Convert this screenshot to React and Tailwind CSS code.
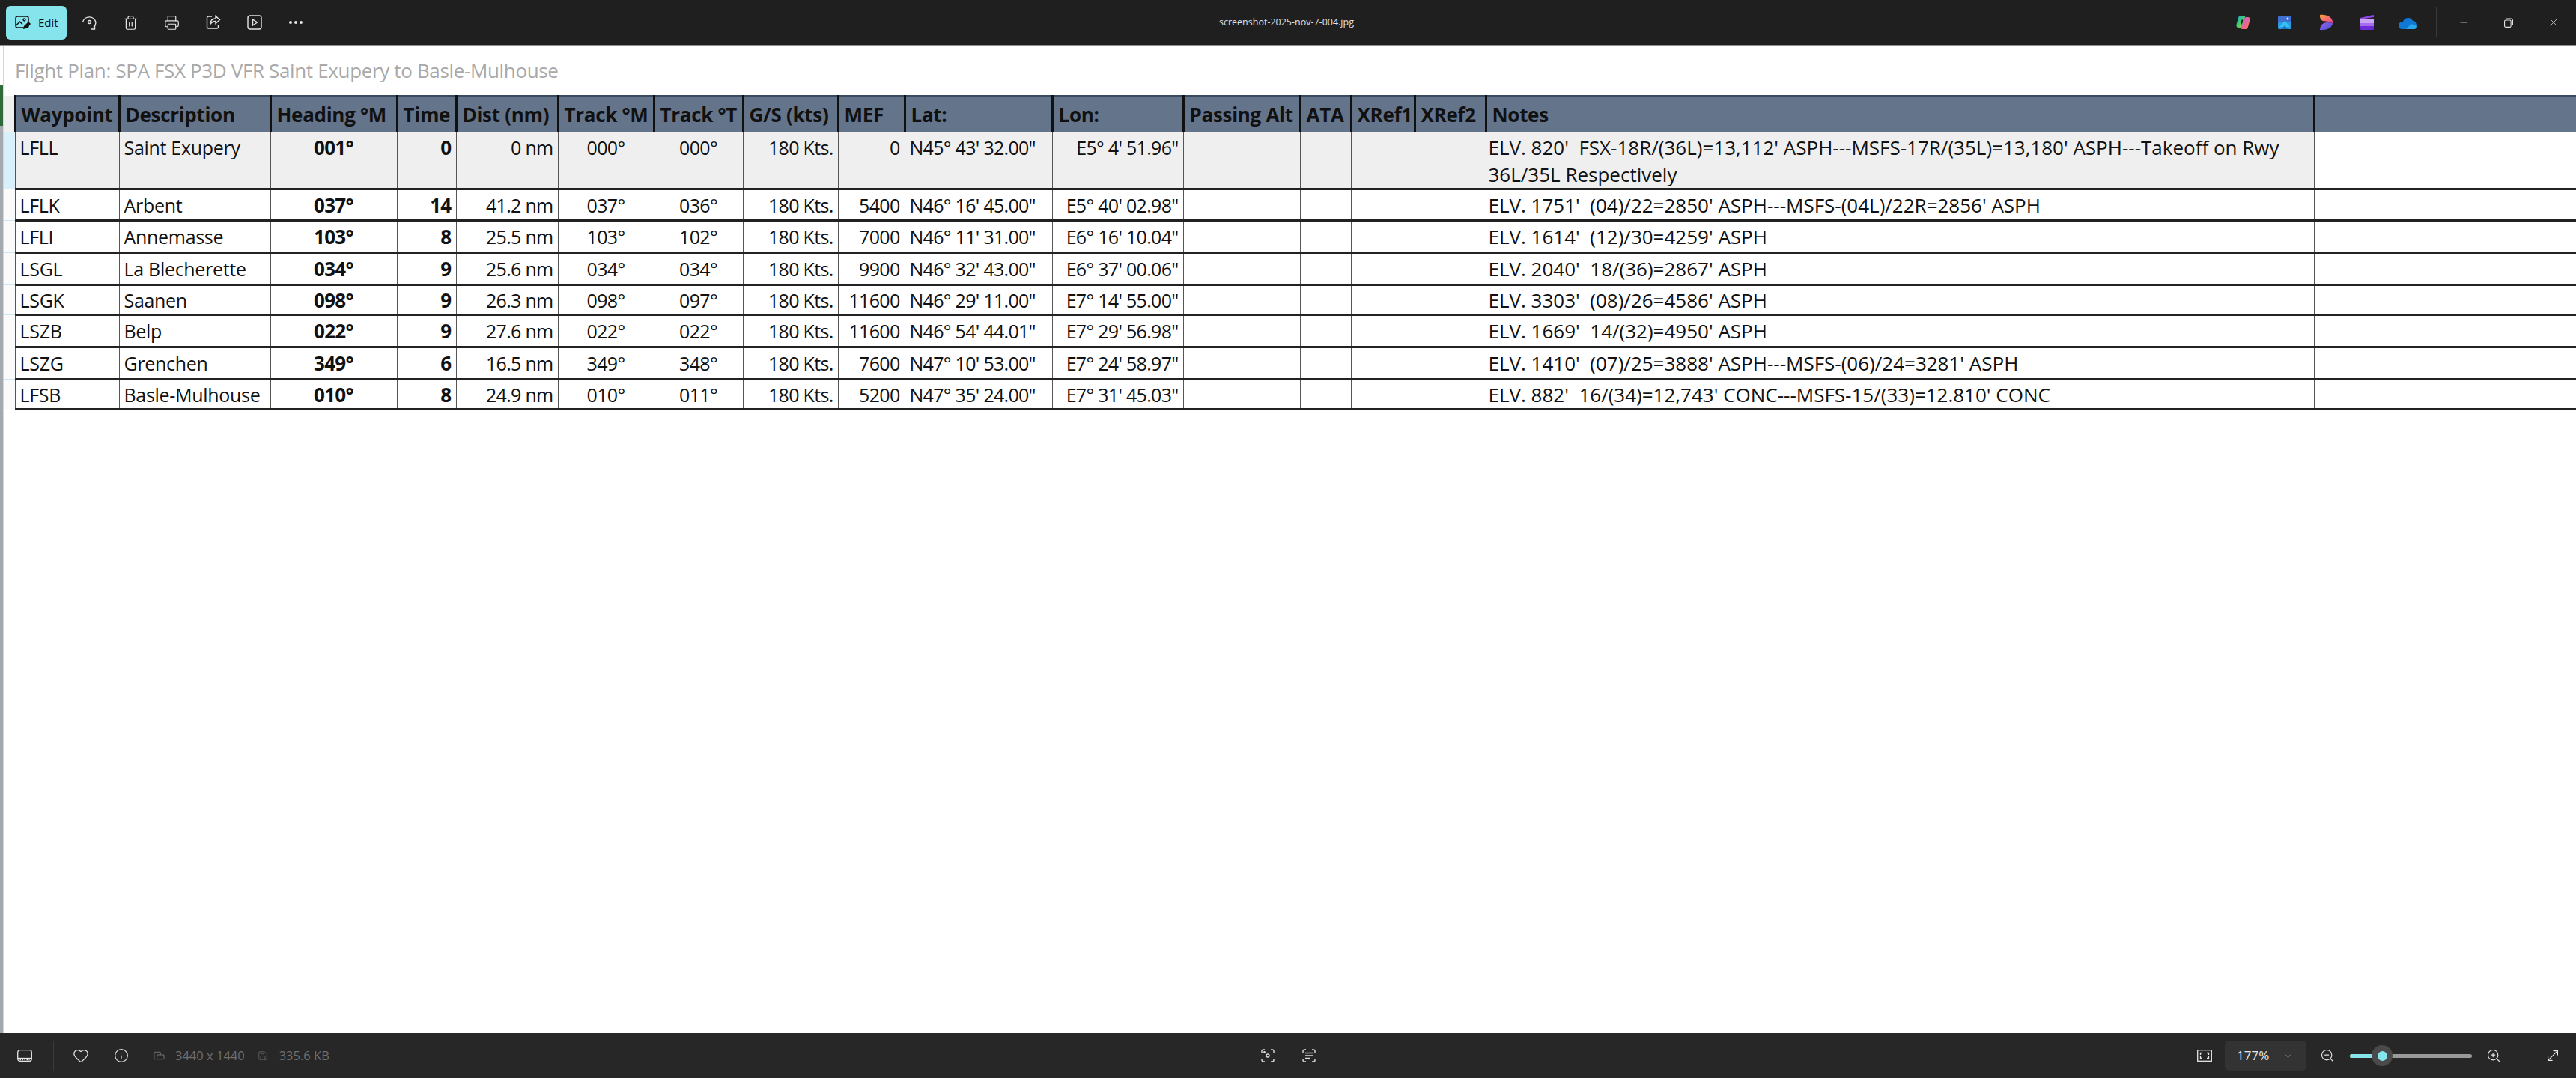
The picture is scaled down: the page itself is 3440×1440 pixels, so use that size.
import React from "react";
import { Trash2, Printer, Minus, X, Heart, Info, Save, ChevronDown, ZoomIn, ZoomOut, MoveDiagonal, MoreHorizontal } from "lucide-react";

const columns = [
  { label: "Waypoint", width: 139 },
  { label: "Description", width: 202 },
  { label: "Heading °M", width: 169 },
  { label: "Time", width: 79 },
  { label: "Dist (nm)", width: 136 },
  { label: "Track °M", width: 128 },
  { label: "Track °T", width: 119 },
  { label: "G/S (kts)", width: 127 },
  { label: "MEF", width: 89 },
  { label: "Lat:", width: 197 },
  { label: "Lon:", width: 175 },
  { label: "Passing Alt", width: 156 },
  { label: "ATA", width: 68 },
  { label: "XRef1", width: 85 },
  { label: "XRef2", width: 95 },
  { label: "Notes", width: 1106 },
];

const rows = [
  ["LFLL", "Saint Exupery", "001°", "0", "0 nm", "000°", "000°", "180 Kts.", "0", `N45° 43' 32.00"`, `E5° 4' 51.96"`, "ELV. 820'\u00a0\u00a0FSX-18R/(36L)=13,112' ASPH---MSFS-17R/(35L)=13,180' ASPH---Takeoff on Rwy 36L/35L Respectively"],
  ["LFLK", "Arbent", "037°", "14", "41.2 nm", "037°", "036°", "180 Kts.", "5400", `N46° 16' 45.00"`, `E5° 40' 02.98"`, "ELV. 1751'\u00a0\u00a0(04)/22=2850' ASPH---MSFS-(04L)/22R=2856' ASPH"],
  ["LFLI", "Annemasse", "103°", "8", "25.5 nm", "103°", "102°", "180 Kts.", "7000", `N46° 11' 31.00"`, `E6° 16' 10.04"`, "ELV. 1614'\u00a0\u00a0(12)/30=4259' ASPH"],
  ["LSGL", "La Blecherette", "034°", "9", "25.6 nm", "034°", "034°", "180 Kts.", "9900", `N46° 32' 43.00"`, `E6° 37' 00.06"`, "ELV. 2040'\u00a0\u00a018/(36)=2867' ASPH"],
  ["LSGK", "Saanen", "098°", "9", "26.3 nm", "098°", "097°", "180 Kts.", "11600", `N46° 29' 11.00"`, `E7° 14' 55.00"`, "ELV. 3303'\u00a0\u00a0(08)/26=4586' ASPH"],
  ["LSZB", "Belp", "022°", "9", "27.6 nm", "022°", "022°", "180 Kts.", "11600", `N46° 54' 44.01"`, `E7° 29' 56.98"`, "ELV. 1669'\u00a0\u00a014/(32)=4950' ASPH"],
  ["LSZG", "Grenchen", "349°", "6", "16.5 nm", "349°", "348°", "180 Kts.", "7600", `N47° 10' 53.00"`, `E7° 24' 58.97"`, "ELV. 1410'\u00a0\u00a0(07)/25=3888' ASPH---MSFS-(06)/24=3281' ASPH"],
  ["LFSB", "Basle-Mulhouse", "010°", "8", "24.9 nm", "010°", "011°", "180 Kts.", "5200", `N47° 35' 24.00"`, `E7° 31' 45.03"`, "ELV. 882'\u00a0\u00a016/(34)=12,743' CONC---MSFS-15/(33)=12.810' CONC"],
];

const rowHeights = ["h-[75px]", "h-[42px]", "h-[43px]", "h-[43px]", "h-[40px]", "h-[43px]", "h-[43px]", "h-[40px]"];

const cellAlign = {
  0: "tracking-[-0.3px]",
  1: "tracking-[-0.3px]",
  2: "text-center font-bold text-[26px]",
  3: "text-right font-bold text-[26px]",
  4: "text-right",
  5: "text-center",
  6: "text-center",
  7: "text-right",
  8: "text-right",
  10: "text-right",
};

// Toolbar icons lucide has no match for
function EditIcon() {
  return (
    <svg width="22" height="22" viewBox="0 0 22 22" fill="none" stroke="#111" strokeWidth="1.5">
      <rect x="1" y="3" width="17" height="15" rx="2.5" />
      <circle cx="12.5" cy="7.5" r="1.4" />
      <path d="M1.5 15l5-5 3.5 3.5" />
      <path d="M11 20l1-4 6-6 3 3-6 6z" fill="#111" stroke="none" />
    </svg>
  );
}

function RotateIcon() {
  return (
    <svg width="22" height="22" viewBox="0 0 22 22" fill="none" stroke="#e6e6e6" strokeWidth="1.4">
      <path d="M1.5 10.5A9 9 0 0 1 19 11a9 9 0 0 1-3 6.5" />
      <path d="M17.5 14.5v5.5h-5.5" />
      <circle cx="10.5" cy="10.5" r="2" />
    </svg>
  );
}

function ShareIcon() {
  return (
    <svg width="20" height="20" viewBox="0 0 20 20" fill="none" stroke="#e6e6e6" strokeWidth="1.4">
      <path d="M8 2H3.500A2 2 0 0 0 1.500 4v12a2 2 0 0 0 2 2h11a2 2 0 0 0 2-2v-3" />
      <path d="M13 1.500l5.500 5-5.500 5V8.500c-3.500 0-5.500 1-7 4 0-5 2.500-7.500 7-7.500z" />
    </svg>
  );
}

function SlideshowIcon() {
  return (
    <svg width="20" height="20" viewBox="0 0 20 20" fill="none" stroke="#e6e6e6" strokeWidth="1.4">
      <rect x="1" y="1" width="18" height="18" rx="3" />
      <path d="M7.500 6l6 4-6 4z" />
    </svg>
  );
}

function CopilotIcon() {
  return (
    <svg width="20" height="20" viewBox="0 0 20 20">
      <defs>
        <linearGradient id="cpA" x1="0" y1="0" x2="1" y2="1">
          <stop offset="0" stopColor="#1fa3e8" />
          <stop offset="0.5" stopColor="#3ecf6e" />
          <stop offset="1" stopColor="#f6c21c" />
        </linearGradient>
        <linearGradient id="cpB" x1="0" y1="0" x2="1" y2="1">
          <stop offset="0" stopColor="#b06ae8" />
          <stop offset="0.6" stopColor="#f0658a" />
          <stop offset="1" stopColor="#f58a2c" />
        </linearGradient>
      </defs>
      <path d="M6 1h5c1 0 1.500 1 1 2L8 15c-.5 1.500-1.500 2-3 2H3C1 17 0 15 .5 13L3 4c.5-2 1.500-3 3-3z" fill="url(#cpA)" />
      <path d="M13 19H8c-1 0-1.500-1-1-2l4-12c.5-1.500 1.500-2 3-2h2c2 0 3 2 2.500 4L16 16c-.5 2-1.500 3-3 3z" fill="url(#cpB)" />
      <path d="M7.500 6.500h2L8 12.500H6z" fill="#1f1f1f" />
    </svg>
  );
}

function PhotosIcon() {
  return (
    <svg width="18" height="18" viewBox="0 0 18 18">
      <rect width="18" height="18" rx="2" fill="#3f6fd0" />
      <rect y="9" width="18" height="9" rx="2" fill="#2c9be0" />
      <path d="M2 15l7-8 7 8z" fill="#35c3f2" />
      <path d="M5 18l4-5 4 5z" fill="#1877c9" />
      <circle cx="13" cy="4" r="1.500" fill="#fff" />
    </svg>
  );
}

function DesignerIcon() {
  return (
    <svg width="18" height="22" viewBox="0 0 18 22">
      <defs>
        <linearGradient id="dsA" x1="0" y1="0" x2="1" y2="1">
          <stop offset="0" stopColor="#f9a13c" />
          <stop offset="1" stopColor="#ec3f9c" />
        </linearGradient>
        <linearGradient id="dsB" x1="0" y1="0" x2="1" y2="1">
          <stop offset="0" stopColor="#a05ce8" />
          <stop offset="1" stopColor="#3e58d8" />
        </linearGradient>
      </defs>
      <path d="M1 1c9-1 17 3 17 10 0 .5 0 1-.1 1.500C14 9 8 10 5 9 2 8 .5 4 1 1z" fill="url(#dsA)" />
      <path d="M1 21c0-6 4-10 10-10 3 0 6 1 7 1.500C17 18 10 22 1 21z" fill="url(#dsB)" />
    </svg>
  );
}

function ClipchampIcon() {
  return (
    <svg width="18" height="20" viewBox="0 0 18 20">
      <path d="M0 4L17 0c.7 0 1 .5 1 1v2L0 6z" fill="#8f44e8" />
      <rect y="6" width="18" height="5" fill="#c9a6f5" />
      <rect y="11" width="18" height="4" fill="#a86cf0" />
      <path d="M0 15h18v3.500c0 .8-.7 1.500-1.500 1.500h-15C.7 20 0 19.300 0 18.500z" fill="#6d2cd8" />
    </svg>
  );
}

function OneDriveIcon() {
  return (
    <svg width="25" height="17" viewBox="0 0 25 17">
      <path d="M6 7a7 7 0 0 1 13-1c3 0 6 2 6 6 0 3-2 5-5 5H5c-3 0-5-2-5-5s2.500-5 6-5z" fill="#0f78d4" />
      <path d="M10 17l7-7 8 3c0 2-2 4-5 4z" fill="#28a8ea" />
    </svg>
  );
}

function FilmstripIcon() {
  return (
    <svg width="20" height="16" viewBox="0 0 20 16" fill="none" stroke="#e6e6e6" strokeWidth="1.3">
      <rect x="0.700" y="0.700" width="18.600" height="14.600" rx="3" />
      <path d="M1 11.500h18" />
      <path d="M3.500 13.500h13" strokeDasharray="1.500 1.500" />
    </svg>
  );
}

function RestoreIcon() {
  return (
    <svg width="12" height="13" viewBox="0 0 12 13" fill="none" stroke="#e6e6e6" strokeWidth="1.1">
      <rect x="0.600" y="3" width="8.500" height="9.400" rx="1.500" />
      <path d="M3 1h6.500a2 2 0 0 1 1.900 2v7" />
    </svg>
  );
}

function SizeIcon() {
  return (
    <svg width="15" height="12" viewBox="0 0 16 12" fill="none" stroke="#707070" strokeWidth="1.100">
      <path d="M1 11V2.500A1.500 1.500 0 0 1 2.500 1h6A1.500 1.500 0 0 1 10 2.500V5" />
      <rect x="5" y="5" width="10" height="6" rx="1" />
      <path d="M1 11h4" />
    </svg>
  );
}

function VisualSearchIcon() {
  return (
    <svg width="18" height="18" viewBox="0 0 18 18" fill="none" stroke="#dcdcdc" strokeWidth="1.400">
      <path d="M1 5V3a2 2 0 0 1 2-2h2M13 1h2a2 2 0 0 1 2 2v2M17 13v2a2 2 0 0 1-2 2h-2M5 17H3a2 2 0 0 1-2-2v-2" />
      <circle cx="9" cy="9" r="2" />
      <circle cx="4.500" cy="4.500" r="0.700" />
    </svg>
  );
}

function TextScanIcon() {
  return (
    <svg width="18" height="18" viewBox="0 0 18 18" fill="none" stroke="#dcdcdc" strokeWidth="1.400">
      <path d="M1 5V3a2 2 0 0 1 2-2h2M13 1h2a2 2 0 0 1 2 2v2M17 13v2a2 2 0 0 1-2 2h-2M5 17H3a2 2 0 0 1-2-2v-2" />
      <path d="M4 5.500h10M4 9h10M4 12.500h6" />
    </svg>
  );
}

function FitIcon() {
  return (
    <svg width="20" height="16" viewBox="0 0 20 16" fill="none" stroke="#e6e6e6" strokeWidth="1.300">
      <rect x="0.700" y="0.700" width="18.600" height="14.600" />
      <path d="M7 4.500H4.500V7M13 4.500h2.500V7M7 11.500H4.500V9M13 11.500h2.500V9" />
    </svg>
  );
}

function Slot({ children }) {
  return <div className="w-[55px] flex justify-center">{children}</div>;
}

function WindowButton({ children }) {
  return <div className="w-[60px] flex justify-center text-[#e6e6e6]">{children}</div>;
}

export default function App() {
  return (
    <div className="h-screen flex flex-col font-['Open_Sans',sans-serif] bg-white overflow-hidden">
      <header className="h-[61px] shrink-0 bg-[#1f1f1f] flex items-center border-b border-[#8b9094] pl-2">
        <button className="w-[81px] h-[45px] bg-[#86e4ec] rounded-md flex items-center pl-3 gap-[9px] text-[#111] text-[15px]">
          <EditIcon />
          Edit
        </button>
        <div className="flex items-center ml-[3px] text-[#e6e6e6]">
          <Slot><RotateIcon /></Slot>
          <Slot><Trash2 size={21} strokeWidth={1.4} /></Slot>
          <Slot><Printer size={21} strokeWidth={1.4} /></Slot>
          <Slot><ShareIcon /></Slot>
          <Slot><SlideshowIcon /></Slot>
          <Slot><MoreHorizontal size={24} strokeWidth={2} /></Slot>
        </div>
        <div className="flex-1 text-center text-[#e0e0e0] text-[12.500px] pl-[46px]">screenshot-2025-nov-7-004.jpg</div>
        <div className="flex items-center mr-[10px]">
          <Slot><CopilotIcon /></Slot>
          <Slot><PhotosIcon /></Slot>
          <Slot><DesignerIcon /></Slot>
          <Slot><ClipchampIcon /></Slot>
          <Slot><OneDriveIcon /></Slot>
        </div>
        <div className="w-px h-10 bg-[#3a3a3a] mr-[6px]" />
        <WindowButton><Minus size={14} strokeWidth={1.3} /></WindowButton>
        <WindowButton><RestoreIcon /></WindowButton>
        <WindowButton><X size={16} strokeWidth={1.1} /></WindowButton>
      </header>

      <main className="flex-1 flex min-h-0">
        <div className="w-[5px] shrink-0 flex flex-col bg-[#a4a9ae] border-r border-[#d5d8db]">
          <div className="h-[52px] bg-white" />
          <div className="h-[55px] bg-[#2f6b3a]" />
        </div>
        <div className="flex-1 min-w-0">
          <div className="h-[66px] flex items-center pl-[15px] text-[#a9a9a9] text-[26px] tracking-[-0.35px]">
            Flight Plan: SPA FSX P3D VFR Saint Exupery to Basle-Mulhouse
          </div>
          <table className="table-fixed border-collapse w-[3435px] text-[#111] text-[25px] tracking-[-0.7px]">
            <colgroup>
              <col style={{ width: 15 }} />
              {columns.map((col) => (
                <col key={col.label} style={{ width: col.width }} />
              ))}
              <col />
            </colgroup>
            <thead>
              <tr className="h-[48px]">
                <th className="bg-[#efefef]" />
                {columns.map((col) => (
                  <th key={col.label} className="bg-[#64748b] border-x-[3px] border-x-[#111] border-t-2 border-t-[#3a4a5e] text-left text-[26px] leading-[36px] tracking-[-0.3px] font-bold px-[7px] whitespace-nowrap overflow-hidden">
                    {col.label}
                  </th>
                ))}
                <th className="bg-[#64748b] border-l border-l-[#111] border-t-2 border-t-[#3a4a5e]" />
              </tr>
            </thead>
            <tbody>
              {rows.map((row, i) => {
                const rowText = i === 0 ? "align-top leading-[36px] pt-[3px] bg-[#efefef]" : "align-middle leading-[32px]";
                const fill = i === 0 ? "bg-[#efefef]" : "";
                return (
                  <tr key={row[0]} className={rowHeights[i]}>
                    <td className={`border-b border-b-[#cfe6f2] ${i === 0 ? "bg-[#d9effa]" : "bg-[#fafafa]"}`} />
                    {row.slice(0, 11).map((cell, j) => (
                      <td
                        key={j}
                        className={`border-x border-x-[#555] border-b-[3px] border-b-[#222] px-[6px] whitespace-nowrap overflow-hidden ${rowText} ${cellAlign[j] || ""}`}
                      >
                        {cell}
                      </td>
                    ))}
                    <td className={`border-x border-x-[#555] border-b-[3px] border-b-[#222] ${fill}`} />
                    <td className={`border-x border-x-[#555] border-b-[3px] border-b-[#222] ${fill}`} />
                    <td className={`border-x border-x-[#555] border-b-[3px] border-b-[#222] ${fill}`} />
                    <td className={`border-x border-x-[#555] border-b-[3px] border-b-[#222] ${fill}`} />
                    <td className={`border-x border-x-[#555] border-b-[3px] border-b-[#222] px-[3px] text-[26px] tracking-[0px] ${rowText}`}>{row[11]}</td>
                    <td className="border-l border-l-[#555] border-b-[3px] border-b-[#222]" />
                  </tr>
                );
              })}
            </tbody>
          </table>
        </div>
      </main>

      <footer className="h-[60px] shrink-0 bg-[#272727] grid grid-cols-[1fr_auto_1fr] items-center text-[#e6e6e6]">
        <div className="flex items-center pl-[23px]">
          <FilmstripIcon />
          <div className="w-px h-10 bg-[#3a3a3a] ml-[28px]" />
          <Heart size={22} strokeWidth={1.4} className="ml-[25px]" />
          <Info size={20} strokeWidth={1.4} className="ml-[33px]" />
          <div className="flex items-center ml-[33px] text-[#6f6f6f] text-[16.500px]">
            <SizeIcon />
            <span className="ml-[14px]">3440 x 1440</span>
            <Save size={14} strokeWidth={1.2} className="ml-[17px]" />
            <span className="ml-[15px]">335.6 KB</span>
          </div>
        </div>
        <div className="flex items-center gap-[37px]">
          <VisualSearchIcon />
          <TextScanIcon />
        </div>
        <div className="flex items-center justify-end pr-[20px]">
          <FitIcon />
          <div className="w-[109px] h-10 bg-[#333] rounded-md flex items-center justify-between pl-4 pr-[18px] ml-[17px] text-[17px]">
            177%
            <ChevronDown size={13} strokeWidth={1.3} className="text-[#aaa]" />
          </div>
          <ZoomOut size={20} strokeWidth={1.4} className="ml-[18px]" />
          <div className="w-[163px] h-[5px] rounded-full bg-[#9a9a9a] ml-[20px] flex items-center relative">
            <div className="w-[42px] h-full bg-[#86e4ec] rounded-l-full" />
            <div className="absolute left-[29px] w-7 h-7 rounded-full bg-[#4a4a4a] flex items-center justify-center">
              <div className="w-[13px] h-[13px] rounded-full bg-[#86e4ec]" />
            </div>
          </div>
          <ZoomIn size={20} strokeWidth={1.4} className="ml-[19px]" />
          <div className="w-px h-10 bg-[#3a3a3a] ml-[30px]" />
          <MoveDiagonal size={22} strokeWidth={1.3} className="ml-[27px]" />
        </div>
      </footer>
    </div>
  );
}
